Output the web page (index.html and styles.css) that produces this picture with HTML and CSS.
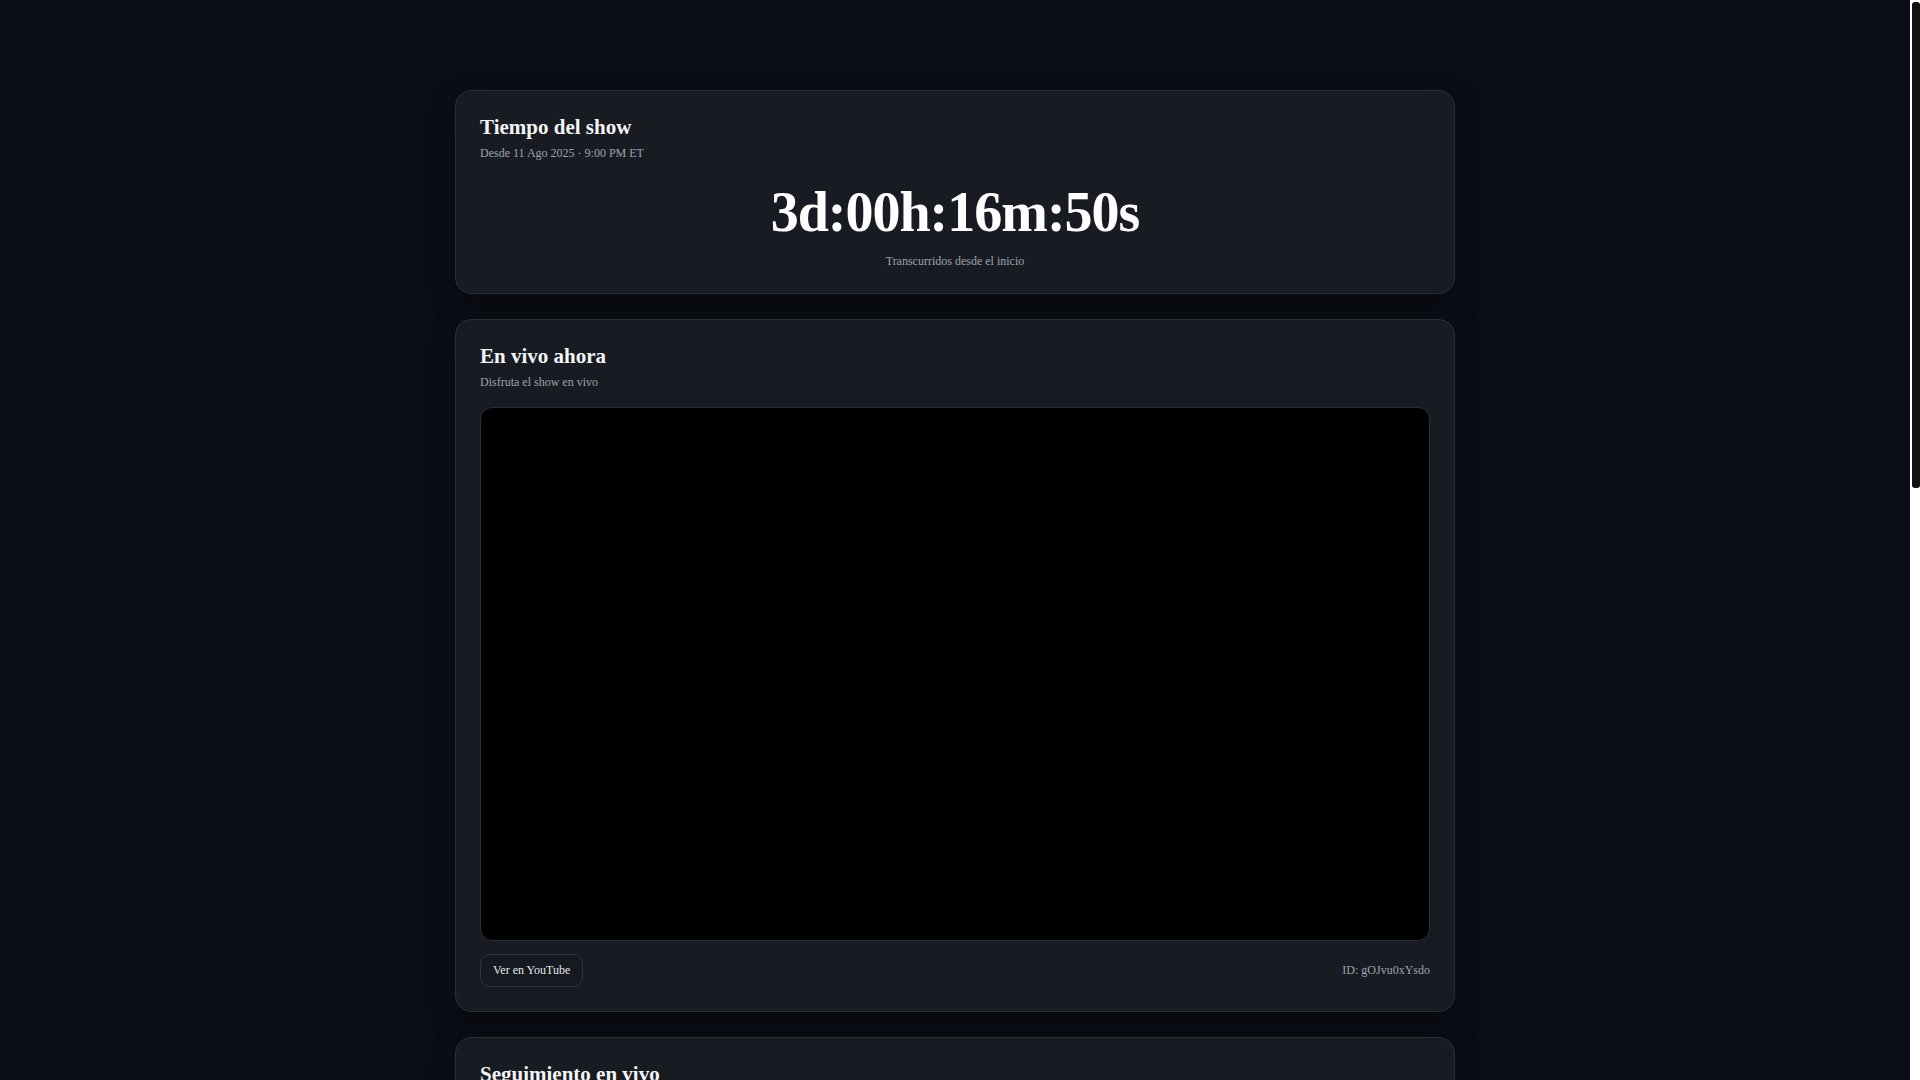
FILE: index.html
```html
<!DOCTYPE html>
<html lang="es">
<head>
<meta charset="utf-8">
<title>Tiempo del show</title>
<link rel="stylesheet" href="styles.css">
</head>
<body>
<main class="page">
  <section class="card">
    <header class="card-head">
      <h2 class="card-title">Tiempo del show</h2>
      <p class="card-sub">Desde 11 Ago 2025 · 9:00 PM ET</p>
    </header>
    <div class="timer">3d:00h:16m:50s</div>
    <p class="timer-caption">Transcurridos desde el inicio</p>
  </section>

  <section class="card">
    <header class="card-head">
      <h2 class="card-title">En vivo ahora</h2>
      <p class="card-sub">Disfruta el show en vivo</p>
    </header>
    <div class="video"></div>
    <div class="video-actions">
      <a class="btn" href="#">Ver en YouTube</a>
      <span class="video-id">ID: gOJvu0xYsdo</span>
    </div>
  </section>

  <section class="card card-tall">
    <header class="card-head">
      <h2 class="card-title">Seguimiento en vivo</h2>
      <p class="card-sub">Actualizaciones del show</p>
    </header>
  </section>
</main>
<div class="scrollbar" aria-hidden="true"><div class="scrollbar-thumb"></div></div>
</body>
</html>
```

FILE: styles.css
```css
html, body {
  margin: 0;
  padding: 0;
}

body {
  background: #0b0e15;
  color: #f3f4f6;
  font-family: "Liberation Serif", "Times New Roman", serif;
  padding-right: 10px;
}

.scrollbar {
  position: fixed;
  top: 0;
  right: 0;
  width: 10px;
  height: 100vh;
  background: #ffffff;
}

.scrollbar-thumb {
  margin: 2px 0 0 2px;
  height: 486px;
  background: #121212;
  border-radius: 3px;
}

.page {
  max-width: 1000px;
  margin: 0 auto;
  padding: 90px 0 90px;
  display: flex;
  flex-direction: column;
  gap: 25px;
}

.card {
  background: #181b22;
  border: 1px solid #2a2e36;
  border-radius: 16px;
  padding: 24px;
  box-shadow: 0 10px 28px rgba(0, 0, 0, 0.35);
}

.card-tall {
  min-height: 1220px;
}

.card-head {
  margin-bottom: 18px;
}

.card-title {
  margin: 0;
  font-size: 21px;
  line-height: 24px;
  font-weight: 700;
  color: #f3f4f6;
}

.card-sub {
  margin: 7px 0 0;
  font-size: 12px;
  line-height: 14px;
  color: #9ca3af;
}

.timer {
  text-align: center;
  font-size: 56px;
  line-height: 1.1;
  font-weight: 700;
  letter-spacing: -1px;
  color: #ffffff;
}

.card-head + .timer {
  margin-top: 22px;
}

.timer-caption {
  margin: 9px 0 0;
  text-align: center;
  font-size: 12px;
  line-height: 16px;
  color: #9ca3af;
}

.video {
  width: 100%;
  aspect-ratio: 16 / 9;
  background: #000000;
  border: 1px solid #2a2e36;
  border-radius: 12px;
  box-sizing: border-box;
}

.video-actions {
  margin-top: 13px;
  display: flex;
  align-items: center;
  justify-content: space-between;
}

.btn {
  display: inline-block;
  padding: 9px 12px;
  font-size: 12px;
  line-height: 13px;
  color: #e5e7eb;
  text-decoration: none;
  background: #161920;
  border: 1px solid #2e323a;
  border-radius: 10px;
}

.video-id {
  font-size: 12px;
  color: #9ca3af;
}
```
